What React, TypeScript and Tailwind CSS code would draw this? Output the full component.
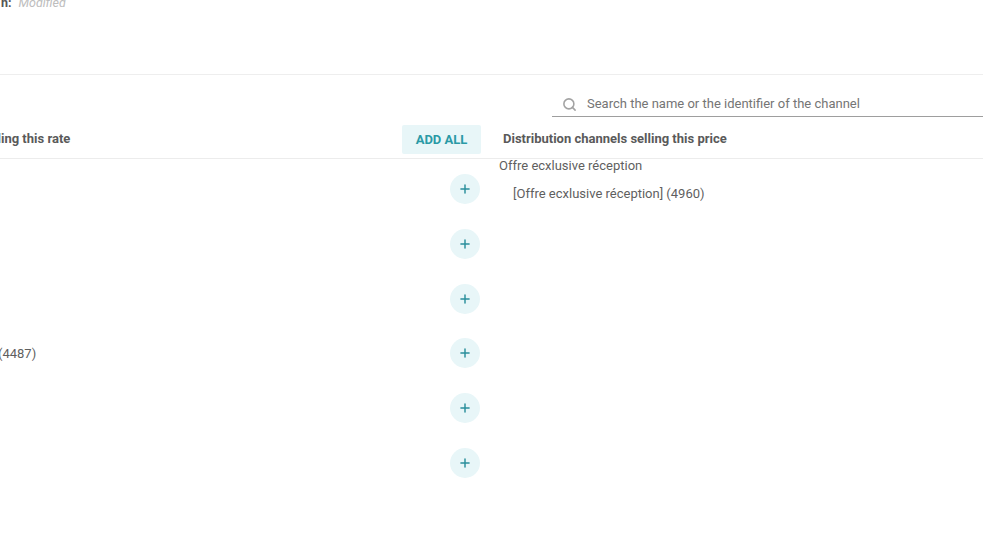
import { Plus, Search } from "lucide-react";

const ROWS = ["", "", "", "(4487)", "", ""];

function AvailableColumn() {
  return (
    <div className="w-[485px] shrink-0">
      <div className="flex h-[34px] items-start justify-between border-b border-[#ececec] pr-1">
        <span className="-ml-[147px] mt-[5px] whitespace-nowrap text-[13px] font-bold leading-[18px] text-[#5a5a5a]">
          Distribution channels selling this rate
        </span>
        <button className="flex h-[29px] w-[79px] items-center justify-center rounded-[2px] bg-[#e8f6f8] text-[13px] font-bold text-[#2a9aa6]">
          ADD ALL
        </button>
      </div>
      <div className="flex flex-col gap-[24.8px] pt-[15px]">
        {ROWS.map((label, i) => (
          <div key={i} className="flex h-[30px] items-center justify-between pr-[5px]">
            <span className="-ml-[2px] text-[13px] text-[#5f5f5f]">{label}</span>
            <button className="flex h-[30px] w-[30px] items-center justify-center rounded-full bg-[#e8f6f8] text-[#2a8f9c]">
              <Plus className="h-[14px] w-[14px]" strokeWidth={2.5} />
            </button>
          </div>
        ))}
      </div>
    </div>
  );
}

function SellingColumn() {
  return (
    <div className="flex-1">
      <div className="flex h-[34px] items-start border-b border-[#ececec] pl-[18px]">
        <span className="mt-[5px] text-[13px] font-bold leading-[18px] text-[#5a5a5a]">
          Distribution channels selling this price
        </span>
      </div>
      <div className="flex flex-col pl-[14px] text-[13px] leading-[18px] text-[#5f5f5f]">
        <p className="-mt-[2px]">Offre ecxlusive réception</p>
        <p className="mt-[10px] pl-[14px]">[Offre ecxlusive réception] (4960)</p>
      </div>
    </div>
  );
}

export default function App() {
  return (
    <div className="h-[549px] w-[983px] overflow-hidden bg-white font-['Roboto',sans-serif]">
      <div className="flex h-[75px] items-start border-b border-[#eeeeee]">
        <p className="-mt-[6px] ml-[1px] flex gap-[7px] text-[12.5px] leading-[18px]">
          <span className="font-bold text-[#555]">n:</span>
          <span className="italic text-[#bdbdbd]">Modified</span>
        </p>
      </div>
      <div className="flex justify-end pt-[17px]">
        <div className="flex h-[25px] w-[431px] items-center border-b border-[#9e9e9e] pl-[10px]">
          <Search className="h-[15px] w-[15px] text-[#a3a3a3]" strokeWidth={2.5} />
          <span className="ml-[10px] text-[13px] text-[#757575]">
            Search the name or the identifier of the channel
          </span>
        </div>
      </div>
      <div className="flex pt-[8px]">
        <AvailableColumn />
        <SellingColumn />
      </div>
    </div>
  );
}
